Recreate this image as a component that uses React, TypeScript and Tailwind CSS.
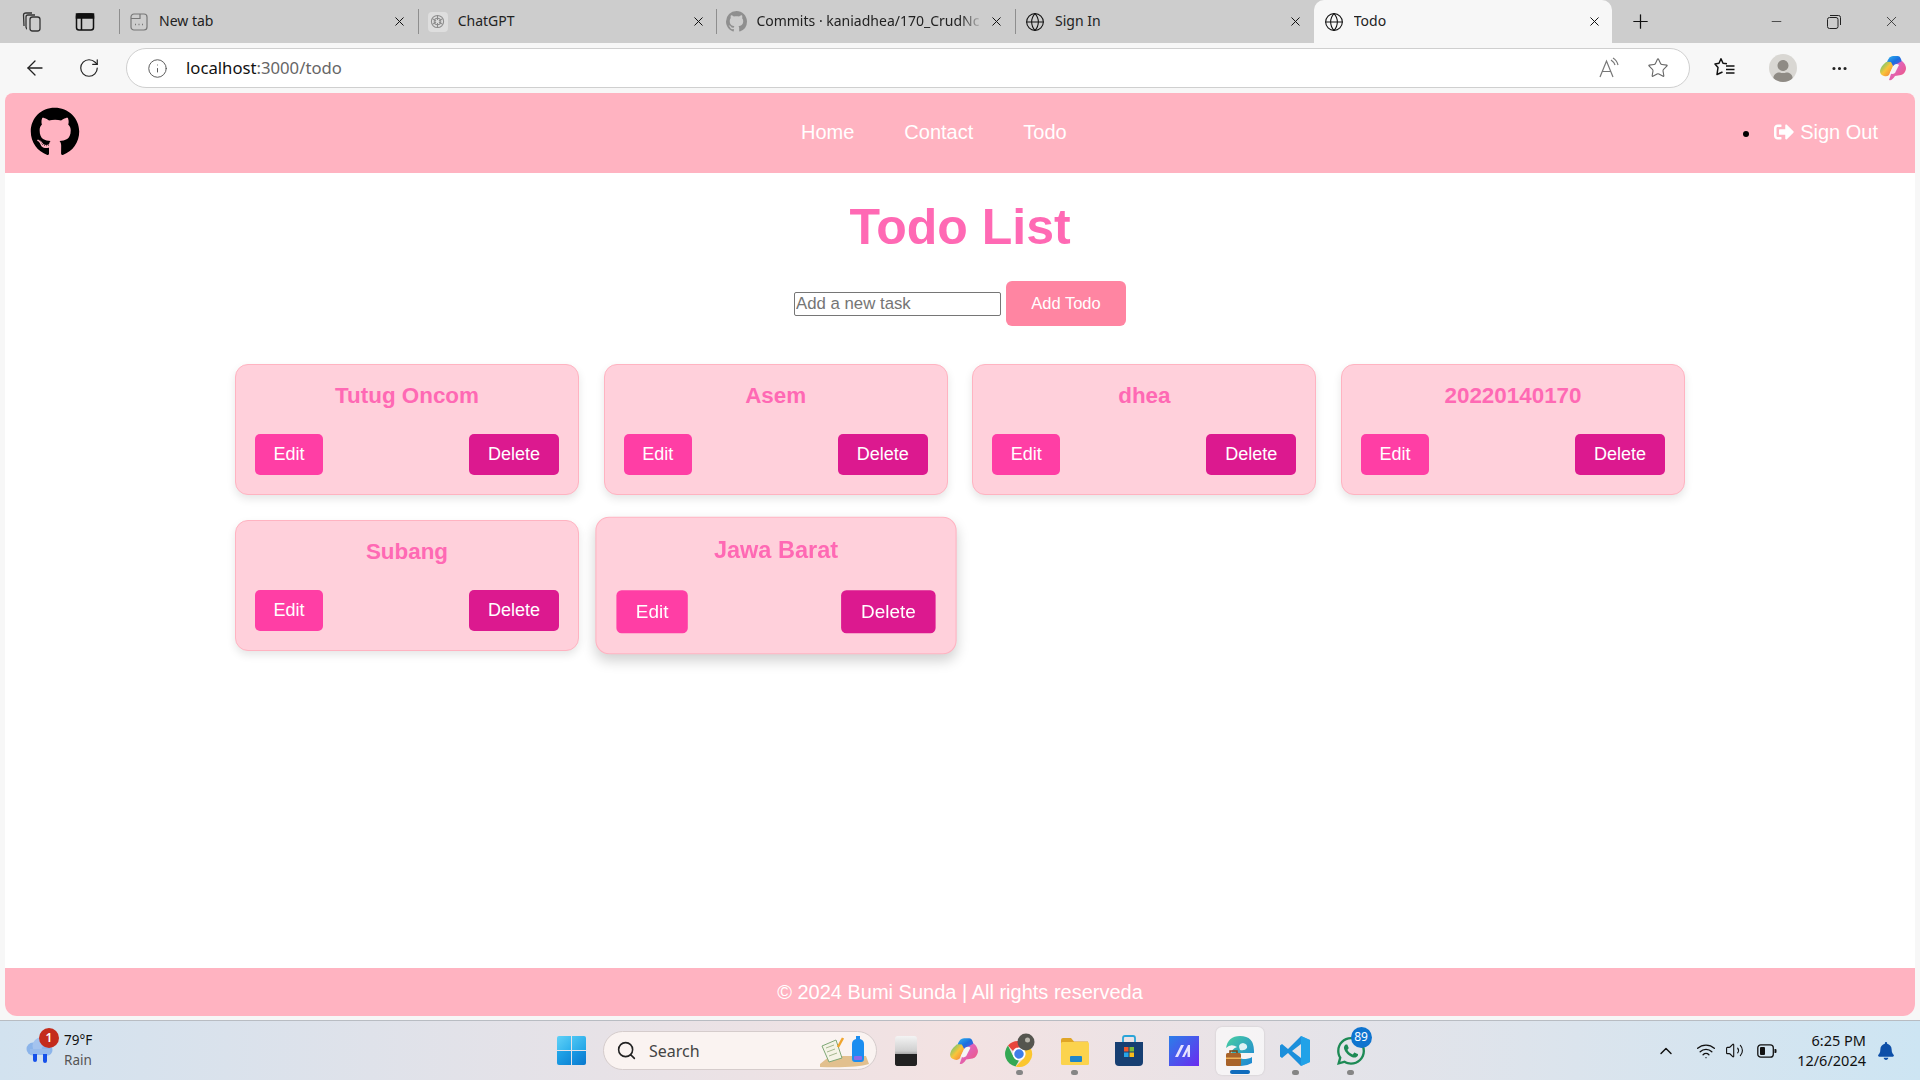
import { ArrowLeft, RotateCw, Info, Star, Globe, X, Plus, Minus, Search, ChevronUp, Wifi, Volume2, MoreHorizontal } from "lucide-react";
import { FaGithub, FaSignOutAlt, FaWhatsapp, FaBell, FaUser } from "react-icons/fa";
import { VscGithubInverted } from "react-icons/vsc";
import type { ReactNode } from "react";

function Collections() {
  return (
    <svg width="22" height="22" viewBox="0 0 22 22" fill="none" stroke="#333" strokeWidth="1.3">
      <rect x="9" y="6" width="10" height="14" rx="2.5" />
      <path d="M6 18 Q5.500 18 5 16 L5 6 Q5 4 7 4 L14 4" />
      <path d="M3 15 L2.500 4 Q2.500 2 5 2 L11 2" />
    </svg>
  );
}
function VerticalTabs() {
  return (
    <svg width="20" height="20" viewBox="0 0 20 20" fill="none" stroke="#111" strokeWidth="1.5">
      <rect x="1.500" y="2" width="17" height="16" rx="2.500" />
      <rect x="1.500" y="2" width="17" height="4" fill="#111" />
      <path d="M6.500 6v12" />
    </svg>
  );
}
function NewTabIcon() {
  return (
    <svg width="18" height="18" viewBox="0 0 18 18" fill="none" stroke="#777" strokeWidth="1.2">
      <rect x="1" y="1" width="16" height="16" rx="3" />
      <path d="M1 5.500h9V1" />
      <path d="M5 11.500h1M8.500 11.500h1M12 11.500h1" strokeWidth="1.500" />
    </svg>
  );
}
function GptIcon() {
  return (
    <div className="flex h-[20px] w-[20px] items-center justify-center rounded-[4px] bg-[#dedede]">
      <svg width="15" height="15" viewBox="0 0 16 16" fill="none" stroke="#8c8c8c" strokeWidth="1.1">
        <circle cx="8" cy="8" r="6.500" />
        <circle cx="8" cy="8" r="3.500" />
        <path d="M8 1.500v5M2.500 5l4 2.500M13.500 5l-4 2.500M2.500 11l4-2.500M13.500 11l-4-2.500M8 14.500v-5" />
      </svg>
    </div>
  );
}
function ReadAloud() {
  return (
    <svg width="22" height="22" viewBox="0 0 22 22" fill="none" stroke="#777" strokeWidth="1.200">
      <path d="M2 20 L8.500 4 L15 20 M4.500 14.500 H12.500" />
      <path d="M13 3 Q16 5 17 8 M15 1 Q19 3.500 20 8" />
    </svg>
  );
}
function Favorites() {
  return (
    <svg width="22" height="22" viewBox="0 0 22 22" fill="none" stroke="#111" strokeWidth="1.500" strokeLinejoin="round">
      <path d="M13 6.800 L9 6.300 L7 1.800 L5 6.300 L1 7 L4 10.500 L3 17.500 L8.500 15" />
      <path d="M12 9h8.500M12 12.500h8.500M12 16h8.500" />
    </svg>
  );
}
function Restore() {
  return (
    <svg width="14" height="14" viewBox="0 0 14 14" fill="none" stroke="#222" strokeWidth="1">
      <rect x="0.500" y="2.500" width="10.500" height="11" rx="2" />
      <path d="M3 0.500h8.500a2 2 0 0 1 2 2V10" />
    </svg>
  );
}
function CopilotIcon({ size, id }: { size: number; id: string }) {
  return (
    <svg width={size} height={size} viewBox="0 0 28 28">
      <defs>
        <linearGradient id={id + "a"} x1="0" y1="0" x2="1" y2="1">
          <stop offset="0" stopColor="#2fb6ee" />
          <stop offset="0.500" stopColor="#1a6fe0" />
          <stop offset="1" stopColor="#7a4fd8" />
        </linearGradient>
        <linearGradient id={id + "b"} x1="0" y1="0" x2="1" y2="1">
          <stop offset="0" stopColor="#3cc98a" />
          <stop offset="0.500" stopColor="#f8c53a" />
          <stop offset="1" stopColor="#f6743a" />
        </linearGradient>
        <linearGradient id={id + "c"} x1="0" y1="0" x2="1" y2="1">
          <stop offset="0" stopColor="#d76ce0" />
          <stop offset="1" stopColor="#f0567a" />
        </linearGradient>
      </defs>
      <path d="M8 8 Q10 2 14 2 L19 2 Q21 2 22 5 L24 11 L14 12 Z" fill={`url(#${id}a)`} />
      <path d="M6 9 Q7 7 12 8 L14 12 L10 21 Q8 23 5 22 Q1 21 1 17 Q2 12 6 9 Z" fill={`url(#${id}b)`} />
      <path d="M16 11 L23 7 Q27 10 27 15 Q26 20 22 21 L16 22 Q13 27 10 26 L12 20 Z" fill={`url(#${id}c)`} />
      <path d="M15 11 Q18 9 20 11 L16 19 Q13 21 11 19 Z" fill="#f5f5f5" />
    </svg>
  );
}
function ChromeIcon() {
  return (
    <svg width="32" height="36" viewBox="0 0 32 36">
      <g transform="translate(0 5)">
        <path d="M16 3 A13 13 0 0 1 27.300 9.500 L16 9.500 A6.500 6.500 0 0 0 10 13 L5 7.500 A13 13 0 0 1 16 3 Z" fill="#e8453c" />
        <path d="M5 7.500 L10.500 19 A6.500 6.500 0 0 0 16 22.500 L12.500 28.500 A13 13 0 0 1 5 7.500 Z" fill="#34a853" />
        <path d="M27.300 9.500 A13 13 0 0 1 12.500 28.500 L21.500 19.500 A6.500 6.500 0 0 0 21.500 12.500 Z" fill="#fbc62f" />
        <circle cx="16" cy="16" r="5.500" fill="#3f7ee8" stroke="#fff" strokeWidth="1.500" />
      </g>
      <circle cx="23" cy="9" r="8.500" fill="#55554f" />
      <circle cx="24.500" cy="7" r="2.500" fill="#b9b6ad" />
    </svg>
  );
}
function FolderIcon() {
  return (
    <svg width="32" height="32" viewBox="0 0 32 32">
      <path d="M2 5 Q2 3 4 3 L12 3 L15 6.500 L29 6.500 L29 10 L2 10 Z" fill="#e0a526" />
      <rect x="2" y="7" width="28" height="23" rx="1.500" fill="#fbd34d" />
      <rect x="11" y="21" width="12" height="6" rx="1" fill="#1f86c9" />
    </svg>
  );
}
function StoreIcon() {
  return (
    <svg width="30" height="32" viewBox="0 0 30 32">
      <path d="M9 8 V3 Q9 1 11 1 L19 1 Q21 1 21 3 V8" fill="none" stroke="#2aa4d8" strokeWidth="1.800" />
      <path d="M1 7 H29 V27 Q29 31 25 31 H5 Q1 31 1 27 Z" fill="#173f72" />
      <rect x="10" y="12" width="4.500" height="4.500" fill="#f0572a" />
      <rect x="15.500" y="12" width="4.500" height="4.500" fill="#7dbb3a" />
      <rect x="10" y="17.500" width="4.500" height="4.500" fill="#27a5e8" />
      <rect x="15.500" y="17.500" width="4.500" height="4.500" fill="#fbbc1a" />
    </svg>
  );
}
function MIcon() {
  return (
    <svg width="30" height="30" viewBox="0 0 30 30">
      <defs>
        <linearGradient id="mg" x1="0" y1="0" x2="1" y2="1">
          <stop offset="0" stopColor="#2b7fe8" />
          <stop offset="1" stopColor="#6a2bf0" />
        </linearGradient>
      </defs>
      <rect width="30" height="30" fill="url(#mg)" />
      <path d="M6 21 L12 9 H15 L9 21 Z M13 21 L19 9 H21 V21 H18.500 V15 L15.500 21 Z" fill="#e6e2ff" />
    </svg>
  );
}
function EdgeIcon() {
  return (
    <svg width="34" height="34" viewBox="0 0 34 34">
      <defs>
        <linearGradient id="eg" x1="0" y1="0" x2="1" y2="1">
          <stop offset="0" stopColor="#4ad0a0" />
          <stop offset="1" stopColor="#1b82d8" />
        </linearGradient>
      </defs>
      <path d="M3 14 Q5 2 17 2 Q31 2 31 17 L31 19 H13 Q13 24 20 25 Q26 25 29 23 V29 Q24 32 18 32 Q8 31 8 21 Q8 15 14 13 Q8 9 3 14 Z" fill="url(#eg)" />
      <path d="M17 16 Q14 10 20 9 Q25 10 24 14 Q22 17 17 16Z" fill="#ffffff" fillOpacity="0.850" />
      <rect x="3" y="19" width="15" height="13" rx="1.500" fill="#a8632a" />
      <path d="M7 19 V17 H14 V19" fill="none" stroke="#7a4314" strokeWidth="1.500" />
      <rect x="3" y="23.500" width="15" height="1.500" fill="#f0b35a" />
    </svg>
  );
}
function VsCodeIcon() {
  return (
    <svg width="32" height="32" viewBox="0 0 32 32">
      <path d="M22 1 L31 5 V27 L22 31 L9 18 L3 23 L1 21.500 V10.500 L3 9 L9 14 Z M22 9 L13 16 L22 23 Z" fill="#1c8fdb" />
      <path d="M22 1 L31 5 V27 L22 31 Z M22 9 V23 L22 23 Z" fill="#23a9ee" fillOpacity="0.700" />
    </svg>
  );
}
function WinLogo() {
  return (
    <div className="grid h-[29px] w-[29px] grid-cols-2 gap-[1px]">
      <div className="rounded-tl-[2px] bg-gradient-to-br from-[#5fd1f7] to-[#2ab0ec]" />
      <div className="rounded-tr-[2px] bg-gradient-to-br from-[#4cc5f3] to-[#1ea4e6]" />
      <div className="rounded-bl-[2px] bg-gradient-to-br from-[#23a8ea] to-[#0e86d6]" />
      <div className="rounded-br-[2px] bg-gradient-to-br from-[#1b9ce6] to-[#0a78cd]" />
    </div>
  );
}
function BookIcon() {
  return (
    <svg width="54" height="34" viewBox="0 0 54 34">
      <path d="M4 30 L14 22 H50 L53 30 Q40 34 4 33 Z" fill="#e2c08e" />
      <path d="M6 12 L20 6 L26 24 L13 28 Z" fill="#f4f3e6" stroke="#7ea776" strokeWidth="1" />
      <path d="M10 14l8-3M11 18l8-3M13 22l8-3" stroke="#a5b88f" strokeWidth="1" />
      <path d="M22 13 L27 4" stroke="#f0a52e" strokeWidth="2.500" />
      <path d="M36 10 Q36 6 40 5 V2 H44 V5 Q48 6 48 10 V25 Q48 28 45 28 H39 Q36 28 36 25 Z" fill="#1c8df0" />
      <rect x="38" y="22" width="8" height="4" rx="1" fill="#8a6be8" />
    </svg>
  );
}
function WeatherIcon() {
  return (
    <svg width="32" height="32" viewBox="0 0 32 32">
      <circle cx="9" cy="14" r="6.500" fill="#8bb4ea" />
      <circle cx="17" cy="11" r="8.500" fill="#a4c3ee" />
      <circle cx="23" cy="15" r="5.500" fill="#8bb4ea" />
      <rect x="6" y="14" width="20" height="6" fill="#97bbec" />
      <path d="M9 19 h4 l0 6 a2 2 0 0 1 -4 0 Z M19 19 h4 l0 7 a2 2 0 0 1 -4 0 Z" fill="#1550ea" />
    </svg>
  );
}
function BatteryIcon() {
  return (
    <svg width="20" height="14" viewBox="0 0 20 14" fill="none">
      <rect x="0.800" y="0.800" width="15.500" height="12.400" rx="3" stroke="#111" strokeWidth="1.300" />
      <rect x="3" y="3" width="5" height="8" rx="1" fill="#111" />
      <path d="M17.500 5 h1 a1 1 0 0 1 1 1 v2 a1 1 0 0 1 -1 1 h-1 Z" fill="#111" />
    </svg>
  );
}

function Tab({ title, icon, active, fade }: { title: string; icon: ReactNode; active?: boolean; fade?: boolean }) {
  return (
    <div className={"relative flex h-[43px] w-[298.700px] shrink-0 items-center " + (active ? "rounded-t-[10px] bg-[#f7f7f7]" : "")}>
      {!active && <div className="h-[25px] w-px shrink-0 bg-[#8e8e8e]" />}
      <div className={"flex w-[22px] shrink-0 items-center justify-center " + (active ? "ml-[9px]" : "ml-[8px]")}>{icon}</div>
      <div
        className={
          "mb-[2px] ml-[9px] w-[227px] overflow-hidden whitespace-nowrap text-[14px] text-[#222] " +
          (fade ? "[mask-image:linear-gradient(to_right,black_90%,transparent_100%)]" : "")
        }
      >
        {title}
      </div>
      <X size={15} strokeWidth={1.600} className="ml-[6px] shrink-0 text-[#111]" />
    </div>
  );
}

function TodoCard({ title, hover }: { title: string; hover?: boolean }) {
  return (
    <div
      className={
        "rounded-[13px] border border-[#ffb3c1] bg-[#ffd0db] px-[19px] pb-[19px] pt-[18px] " +
        (hover ? "scale-[1.05] shadow-[0_6px_12px_rgba(0,0,0,0.18)]" : "shadow-[0_4px_8px_rgba(0,0,0,0.10)]")
      }
    >
      <h3 className="mb-[26px] text-center text-[22.400px] font-bold leading-[25px] text-[#ff69b4]">{title}</h3>
      <div className="flex items-center justify-between">
        <button className="h-[41px] w-[68px] rounded-[5px] bg-[#ff3ea5] text-[18px] text-white">Edit</button>
        <button className="h-[41px] w-[90px] rounded-[5px] bg-[#dc198f] text-[18px] text-white">Delete</button>
      </div>
    </div>
  );
}

function TaskIcon({ children, dot, active }: { children: ReactNode; dot?: boolean; active?: boolean }) {
  return (
    <div className={"relative flex h-[48px] w-[48px] items-center justify-center rounded-[6px] " + (active ? "bg-white/60 shadow-[0_0_2px_rgba(0,0,0,0.15)]" : "")}>
      {children}
      {dot && <div className="absolute bottom-0 h-[5px] w-[7px] rounded-full bg-[#858585]" />}
      {active && <div className="absolute bottom-[1px] h-[4px] w-[20px] rounded-full bg-[#0f6cbd]" />}
    </div>
  );
}

export default function App() {
  return (
    <div className="flex h-screen w-full flex-col overflow-hidden bg-[#f7f7f7] font-['Noto_Sans',sans-serif]">
      {/* tab strip */}
      <div className="flex h-[43px] shrink-0 items-center bg-[#cdcdcd]">
        <div className="flex w-[119px] shrink-0 items-center pl-[21px]">
          <Collections />
          <div className="ml-[32px]"><VerticalTabs /></div>
        </div>
        <Tab title="New tab" icon={<NewTabIcon />} />
        <Tab title="ChatGPT" icon={<GptIcon />} />
        <Tab title="Commits · kaniadhea/170_CrudNc" icon={<VscGithubInverted size={21} className="text-[#8f8f8f]" />} fade />
        <Tab title="Sign In" icon={<Globe size={20} strokeWidth={1.300} className="text-[#111]" />} />
        <Tab title="Todo" icon={<Globe size={20} strokeWidth={1.300} className="text-[#111]" />} active />
        <Plus size={23} strokeWidth={1.300} className="ml-[17px] text-[#111]" />
        <div className="ml-auto flex items-center pr-[20px]">
          <Minus size={15} strokeWidth={1.200} className="text-[#222]" />
          <div className="ml-[43px]"><Restore /></div>
          <X size={17} strokeWidth={1.100} className="ml-[42px] text-[#222]" />
        </div>
      </div>

      {/* toolbar */}
      <div className="flex h-[50px] shrink-0 items-center">
        <div className="flex w-[126px] shrink-0 items-center pl-[23px]">
          <ArrowLeft size={24} strokeWidth={1.300} className="text-[#222]" />
          <RotateCw size={22} strokeWidth={1.300} className="ml-[31px] text-[#222]" />
        </div>
        <div className="flex h-[40px] w-[1564px] shrink-0 items-center rounded-full border border-[#cfcfcf] bg-white pl-[20px] pr-[20px]">
          <Info size={21} strokeWidth={1.100} className="text-[#555]" />
          <span className="ml-[18px] text-[16.700px] text-[#111]">localhost<span className="text-[#666]">:3000/todo</span></span>
          <div className="ml-auto flex items-center">
            <ReadAloud />
            <Star size={22} strokeWidth={1.200} className="ml-[27px] text-[#666]" />
          </div>
        </div>
        <div className="ml-[24px]"><Favorites /></div>
        <div className="ml-[33px] flex h-[28px] w-[28px] items-end justify-center overflow-hidden rounded-full bg-[#d9d7d3]">
          <FaUser size={22} className="text-[#8f8b85]" />
        </div>
        <MoreHorizontal size={19} strokeWidth={2} className="ml-[33px] text-[#222]" />
        <div className="ml-[30px]"><CopilotIcon size={28} id="cpa" /></div>
      </div>

      {/* page */}
      <div className="mx-[5px] flex h-[923px] shrink-0 flex-col overflow-hidden rounded-t-[8px] rounded-b-[12px] bg-white font-['Liberation_Sans',Arial,sans-serif]">
        <nav className="flex h-[80px] shrink-0 items-center bg-[#ffb3c1] pl-[25px] pr-[37px] text-[20px] leading-[24px] text-white">
          <FaGithub size={50} className="mb-[3px] text-black" />
          <div className="mb-[2px] ml-[721px] flex gap-[50px]">
            <span>Home</span>
            <span>Contact</span>
            <span>Todo</span>
          </div>
          <div className="ml-auto flex items-center">
            <div className="mt-[2px] h-[6px] w-[6px] rounded-full bg-black" />
            <div className="mb-[2px] flex items-center">
              <FaSignOutAlt size={20} className="ml-[25px]" />
              <span className="ml-[6px]">Sign Out</span>
            </div>
          </div>
        </nav>

        <main className="flex flex-1 flex-col items-center">
          <h1 className="mt-[26px] text-[50px] font-bold leading-[56px] text-[#ff69b4]">Todo List</h1>
          <div className="mt-[26px] flex items-center gap-[5px]">
            <input
              readOnly
              placeholder="Add a new task"
              className="h-[24px] w-[207px] rounded-[2px] border border-[#767676] bg-white px-[1px] text-[16.800px] outline-none placeholder:text-[#757575]"
            />
            <button className="h-[45px] w-[120px] rounded-[6px] bg-[#ff85a2] text-[16.500px] text-white">Add Todo</button>
          </div>
          <div className="mt-[38px] grid w-[1450px] grid-cols-4 gap-x-[24.700px] gap-y-[25px]">
            <TodoCard title="Tutug Oncom" />
            <TodoCard title="Asem" />
            <TodoCard title="dhea" />
            <TodoCard title="20220140170" />
            <TodoCard title="Subang" />
            <TodoCard title="Jawa Barat" hover />
          </div>
        </main>

        <footer className="flex h-[48px] shrink-0 items-center justify-center bg-[#ffb3c1] text-[20px] text-white">
          © 2024 Bumi Sunda | All rights reserveda
        </footer>
      </div>

      {/* taskbar */}
      <div className="mt-[4px] flex h-[60px] shrink-0 items-center border-t border-[#b8bcc2] bg-gradient-to-r from-[#d2e2ef] via-[#f3e2e2] to-[#cde5f3]">
        <div className="flex w-[547px] shrink-0 items-center pl-[24px]">
          <div className="relative">
            <WeatherIcon />
            <div className="absolute right-[-3px] top-[-7px] flex h-[20px] w-[20px] items-center justify-center rounded-full bg-[#c42b1c] text-[12px] font-semibold leading-none text-white">1</div>
          </div>
          <div className="mb-[2px] ml-[8px] flex flex-col text-[13.500px] leading-[20px]">
            <span className="text-[#111]">79°F</span>
            <span className="text-[#555]">Rain</span>
          </div>
        </div>
        <div className="flex w-[48px] shrink-0 items-center justify-center"><WinLogo /></div>
        <div className="ml-[8px] flex h-[39px] w-[274px] shrink-0 items-center rounded-full border border-[#d5cccc] bg-[#faf3f1] pl-[12px] pr-[6px]">
          <Search size={21} strokeWidth={1.800} className="text-[#222]" />
          <span className="ml-[12px] text-[16px] text-[#444]">Search</span>
          <div className="ml-auto"><BookIcon /></div>
        </div>
        <div className="ml-[5px] flex shrink-0 gap-[7.500px]">
          <TaskIcon>
            <div className="flex h-[30px] w-[22px] items-end rounded-[3px] bg-gradient-to-b from-[#f4f4f4] via-[#cfcfcf] to-[#222]">
              <div className="h-[12px] w-full rounded-b-[3px] bg-[#222]" />
            </div>
          </TaskIcon>
          <div className="ml-[2px]"><TaskIcon><CopilotIcon size={30} id="cpb" /></TaskIcon></div>
          <TaskIcon dot><ChromeIcon /></TaskIcon>
          <TaskIcon dot><FolderIcon /></TaskIcon>
          <div className="ml-[-1px]"><TaskIcon><StoreIcon /></TaskIcon></div>
          <div className="ml-[-0.500px]"><TaskIcon><MIcon /></TaskIcon></div>
          <TaskIcon active><EdgeIcon /></TaskIcon>
          <TaskIcon dot><VsCodeIcon /></TaskIcon>
          <TaskIcon dot>
            <FaWhatsapp size={32} className="text-[#1d8a55]" />
            <div className="absolute right-[3px] top-0 flex h-[21px] w-[21px] items-center justify-center rounded-full bg-[#0f74cf] text-[12px] leading-none text-white">89</div>
          </TaskIcon>
        </div>
        <div className="ml-auto flex items-center pr-[25px]">
          <ChevronUp size={20} strokeWidth={1.700} className="text-[#111]" />
          <Wifi size={20} strokeWidth={1.600} className="ml-[19.500px] text-[#111]" />
          <Volume2 size={19} strokeWidth={1.400} className="ml-[9px] text-[#111]" />
          <div className="ml-[13.500px]"><BatteryIcon /></div>
          <div className="mb-[2px] ml-[20px] flex flex-col items-end text-[14.500px] leading-[20px] text-[#111]">
            <span>6:25 PM</span>
            <span>12/6/2024</span>
          </div>
          <FaBell size={18} className="ml-[11px] text-[#0d4fa8]" />
        </div>
      </div>
    </div>
  );
}
